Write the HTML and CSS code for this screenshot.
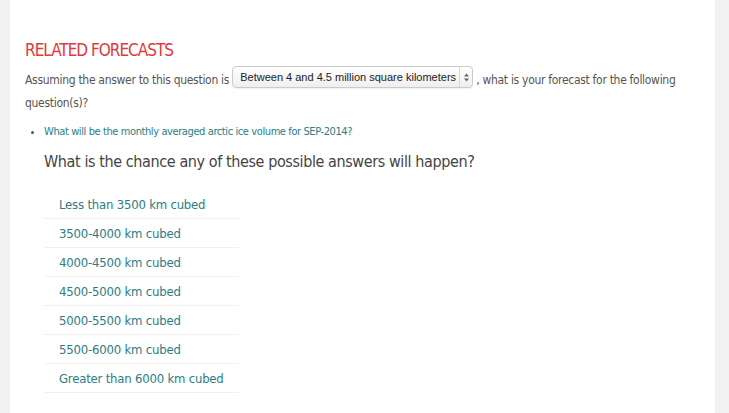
FILE: index.html
```html
<!DOCTYPE html>
<html lang="en">
<head>
    <meta charset="UTF-8">
    <title>Related Forecasts</title>
    <link rel="stylesheet" href="styles.css">
</head>
<body>
    <div class="page">
        <div class="panel">
            <h2 class="related-title">RELATED FORECASTS</h2>
            <p class="assume"><span>Assuming the answer to this question is</span> <span class="fake-select"><span class="select-label">Between 4 and 4.5 million square kilometers</span><span class="select-arrows"><svg width="5" height="9" viewBox="0 0 5 9"><path d="M2.5 0.5L5 3.5H0Z M2.5 8.5L5 5.5H0Z" fill="#666"/></svg></span></span> <span>, what is your forecast for the following</span> <span>question(s)?</span></p>
            <ul class="questions">
                <li><a href="#">What will be the monthly averaged arctic ice volume for SEP-2014?</a></li>
            </ul>
            <h3 class="chance">What is the chance any of these possible answers will happen?</h3>
            <table class="answers">
                <tr><td>Less than 3500 km cubed</td></tr>
                <tr><td>3500-4000 km cubed</td></tr>
                <tr><td>4000-4500 km cubed</td></tr>
                <tr><td>4500-5000 km cubed</td></tr>
                <tr><td>5000-5500 km cubed</td></tr>
                <tr><td>5500-6000 km cubed</td></tr>
                <tr><td>Greater than 6000 km cubed</td></tr>
            </table>
        </div>
    </div>
</body>
</html>
```

FILE: styles.css
```css
body {
    margin: 0;
    background-color: #f2f2f2;
    font-family: 'DejaVu Sans Condensed', 'DejaVu Sans', sans-serif;
    color: #555;
}
.page {
    padding: 0 14px 0 10px;
}
.panel {
    background-color: #fff;
    min-height: 413px;
    padding: 40px 15px 0 15px;
    box-sizing: border-box;
}
.related-title {
    margin: 0 0 6px 0;
    font-size: 17px;
    letter-spacing: -1px;
    font-weight: normal;
    color: #e0393e;
    line-height: 20px;
}
.assume {
    margin: 0;
    font-size: 12px;
    letter-spacing: -0.3px;
    line-height: 23px;
    padding-right: 20px;
}
.fake-select {
    display: inline-flex;
    align-items: stretch;
    box-sizing: border-box;
    height: 22px;
    vertical-align: 3px;
    border: 1px solid #cbcbcb;
    border-radius: 4px;
    background: linear-gradient(#ffffff, #efefef);
    font-family: 'Liberation Sans', Arial, sans-serif;
    font-size: 11px;
    letter-spacing: 0;
    color: #222;
    box-shadow: 0 1px 1px rgba(0, 0, 0, 0.06);
}
.select-label {
    padding: 0 3px 0 7px;
    line-height: 20px;
}
.select-arrows {
    display: flex;
    align-items: center;
    justify-content: center;
    width: 12px;
    border-left: 1px solid #d6d6d6;
}
.questions {
    margin: 8px 0 0 0;
    padding-left: 19px;
    font-size: 11px;
    letter-spacing: -0.4px;
    line-height: 18px;
}
.questions a {
    color: #2b7d87;
    text-decoration: none;
}
.chance {
    margin: 10px 0 0 19px;
    font-size: 16px;
    letter-spacing: -0.4px;
    font-weight: normal;
    color: #444;
    line-height: 22px;
}
.answers {
    margin: 17px 0 0 19px;
    border-collapse: collapse;
    width: 195px;
}
.answers td {
    padding: 0 15px;
    height: 28px;
    font-size: 13px;
    letter-spacing: -0.2px;
    white-space: nowrap;
    color: #2b7d87;
    border-bottom: 1px solid #f1f1f1;
}
```
